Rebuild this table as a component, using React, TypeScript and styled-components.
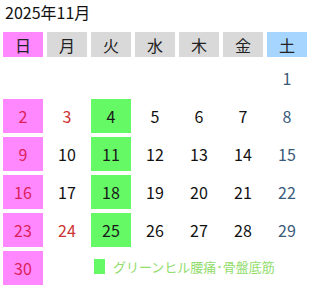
import React from "react";
import styled, { createGlobalStyle } from "styled-components";

const Global = createGlobalStyle`
  html, body { margin: 0; padding: 0; background: #ffffff; }
  body { font-family: "Noto Sans CJK JP", "Noto Sans", sans-serif; }
`;

const Wrap = styled.div`
  padding: 0 0 0 3px;
  width: 315px;
  box-sizing: border-box;
`;

const Title = styled.div`
  font-size: 16px;
  line-height: 24px;
  color: #111111;
  margin-bottom: 8px;
  padding-left: 2px;
`;

const Grid = styled.div`
  display: grid;
  grid-template-columns: repeat(7, 40px);
  grid-template-rows: 25px;
  grid-auto-rows: 34px;
  column-gap: 4px;
  row-gap: 4px;
`;

type Tone = "sun" | "sat" | "plain";

const headBg: Record<Tone, string> = {
  sun: "#ff88ff",
  sat: "#a6d6ff",
  plain: "#d9d9d9",
};

const HeadCell = styled.div<{ $tone: Tone }>`
  background: ${(p) => headBg[p.$tone]};
  color: #222222;
  font-size: 16px;
  display: flex;
  align-items: center;
  justify-content: center;
`;

type Kind = "sun" | "sat" | "holiday" | "open" | "plain";

const dayBg: Record<Kind, string> = {
  sun: "#ff88ff",
  open: "#66f966",
  sat: "transparent",
  holiday: "transparent",
  plain: "transparent",
};

const dayFg: Record<Kind, string> = {
  sun: "#dd1e5a",
  open: "#1a1a1a",
  sat: "#3a5a7a",
  holiday: "#cc3333",
  plain: "#111111",
};

const DayCell = styled.div<{ $kind: Kind }>`
  background: ${(p) => dayBg[p.$kind]};
  color: ${(p) => dayFg[p.$kind]};
  font-size: 16px;
  display: flex;
  align-items: center;
  justify-content: center;
`;

const Legend = styled.div`
  grid-column: 3 / span 5;
  display: flex;
  align-items: center;
  gap: 8px;
  padding-left: 3px;
  font-size: 13px;
  color: #92dc6c;
  margin-top: -4px;
`;

const Swatch = styled.span`
  display: inline-block;
  width: 11px;
  height: 15px;
  background: #66f966;
`;

const heads: { label: string; tone: Tone }[] = [
  { label: "日", tone: "sun" },
  { label: "月", tone: "plain" },
  { label: "火", tone: "plain" },
  { label: "水", tone: "plain" },
  { label: "木", tone: "plain" },
  { label: "金", tone: "plain" },
  { label: "土", tone: "sat" },
];

const holidays = new Set([3, 24]);
const openDays = new Set([4, 11, 18, 25]);

function kindOf(day: number, col: number): Kind {
  if (col === 0) return "sun";
  if (holidays.has(day)) return "holiday";
  if (openDays.has(day)) return "open";
  if (col === 6) return "sat";
  return "plain";
}

export default function App() {
  // November 2025 starts on a Saturday
  const firstCol = 6;
  const cells: React.ReactNode[] = [];
  for (let i = 0; i < firstCol; i++) cells.push(<div key={`e${i}`} />);
  for (let d = 1; d <= 30; d++) {
    const col = (firstCol + d - 1) % 7;
    cells.push(
      <DayCell key={d} $kind={kindOf(d, col)}>
        {d}
      </DayCell>
    );
  }

  return (
    <Wrap>
      <Global />
      <Title>2025年11月</Title>
      <Grid>
        {heads.map((h) => (
          <HeadCell key={h.label} $tone={h.tone}>
            {h.label}
          </HeadCell>
        ))}
        {cells}
        <Legend>
          <Swatch />
          グリーンヒル腰痛･骨盤底筋
        </Legend>
      </Grid>
    </Wrap>
  );
}
